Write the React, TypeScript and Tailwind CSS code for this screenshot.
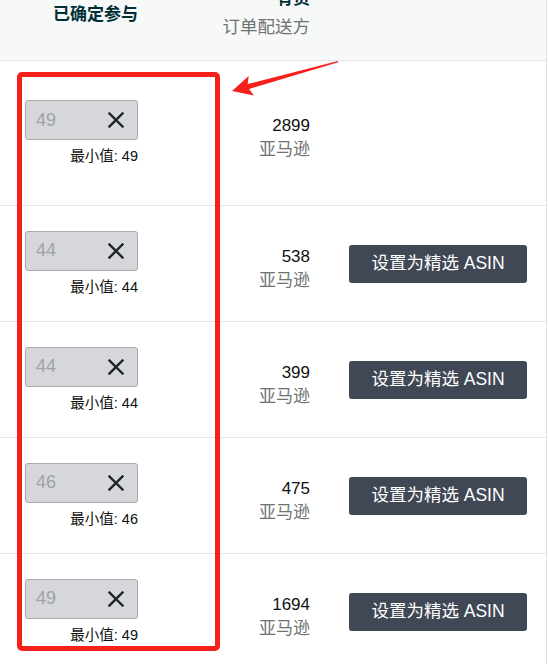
import React from "react";

type Row = { value: number; min: number; count: number; featured: boolean; height: string };

const rows: Row[] = [
  { value: 49, min: 49, count: 2899, featured: false, height: "h-[145px]" },
  { value: 44, min: 44, count: 538, featured: true, height: "h-[116px]" },
  { value: 44, min: 44, count: 399, featured: true, height: "h-[116px]" },
  { value: 46, min: 46, count: 475, featured: true, height: "h-[116px]" },
  { value: 49, min: 49, count: 1694, featured: true, height: "h-[116px]" },
];

const font = "font-['Liberation_Sans','Noto_Sans_CJK_SC',sans-serif]";

const CloseIcon = () => (
  <svg width="16" height="16" viewBox="0 0 16 16" fill="none">
    <path d="M1.5 1.5 L14.5 14.5 M14.5 1.5 L1.5 14.5" stroke="#1f2328" strokeWidth="2.4" strokeLinecap="square" />
  </svg>
);

const TableRow = ({ row }: { row: Row }) => {
  return (
    <div className={`flex items-center border-b border-[#e3e6e6] ${row.height}`}>
      <div className="w-[138px] pl-[25px] flex flex-col">
        <div className="h-[40px] w-[113px] flex items-center justify-between rounded-[3px] border border-[#a7aaae] bg-[#d5d7da] pl-[10px] pr-[13px]">
          <span className="text-[18px] text-[#a0a3a7]">{row.value}</span>
          <CloseIcon />
        </div>
        <p className="text-right text-[14.5px] leading-5 mt-[6px] text-[#0f1111]">最小值: {row.min}</p>
      </div>
      <div className="w-[172px] flex flex-col items-end pt-[10px]">
        <span className="text-[17px] leading-6 text-[#0f1111]">{row.count}</span>
        <span className="text-[17px] leading-6 text-[#6f7373]">亚马逊</span>
      </div>
      {row.featured && (
        <button className="ml-[39px] w-[178px] h-[38px] rounded-[3px] bg-[#3f4854] text-white text-[17.5px]">
          设置为精选 ASIN
        </button>
      )}
    </div>
  );
};

const App = () => {
  return (
    <div className={`relative w-[547px] h-[664px] overflow-hidden bg-white border-r border-[#dfe2e2] ${font}`}>
      <div className="h-[61px] flex bg-[#f7f8f8] border-b border-[#e3e6e6]">
        <div className="w-[191px] text-center pt-[4px]">
          <h1 className="text-[17px] leading-[22px] font-bold text-[#002f36]">已确定参与</h1>
        </div>
        <div className="w-[119px] flex flex-col items-end">
          <span className="text-[17px] leading-[22px] font-bold text-[#002f36] -mt-[12px]">有货</span>
          <span className="text-[17.5px] leading-[22px] text-[#6f7373] mt-[6px]">订单配送方</span>
        </div>
      </div>
      {rows.map((row, i) => (
        <TableRow key={i} row={row} />
      ))}

      {/* annotation overlay */}
      <div className="absolute left-[17px] top-[72px] w-[203px] h-[579px] border-[5px] border-[#f5211a] rounded-[5px]" />
      <svg className="absolute left-0 top-0" width="548" height="120" viewBox="0 0 548 120">
        <polygon
          points="232,91 248.7,76 247.7,84.1 337.9,61 338.2,62.2 249.1,88.9 253.9,95.4"
          fill="#f5211a"
        />
      </svg>
    </div>
  );
};

export default App;
